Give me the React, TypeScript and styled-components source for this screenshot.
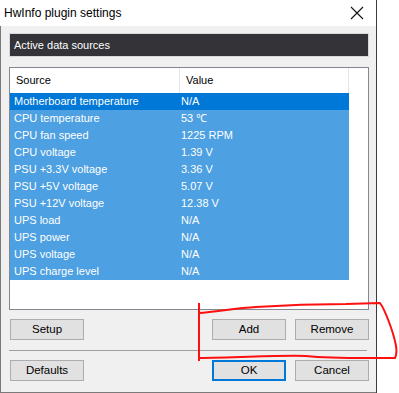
import styled, { createGlobalStyle } from "styled-components";

const GlobalStyle = createGlobalStyle`
  html, body {
    margin: 0;
    padding: 0;
    background: #fff;
  }
  body {
    font-family: "Liberation Sans", "Noto Sans", sans-serif;
    font-size: 11px;
  }
`;

const rows = [
  ["Motherboard temperature", "N/A"],
  ["CPU temperature", "53 \u2103"],
  ["CPU fan speed", "1225 RPM"],
  ["CPU voltage", "1.39 V"],
  ["PSU +3.3V voltage", "3.36 V"],
  ["PSU +5V voltage", "5.07 V"],
  ["PSU +12V voltage", "12.38 V"],
  ["UPS load", "N/A"],
  ["UPS power", "N/A"],
  ["UPS voltage", "N/A"],
  ["UPS charge level", "N/A"],
];

const App = () => {
  return (
    <>
      <GlobalStyle />
      <Screen>
        <Window>
          <TitleBar>
            <Title>HwInfo plugin settings</Title>
            <CloseIcon width="14" height="14" viewBox="0 0 14 14">
              <path d="M1 1 L13 13 M13 1 L1 13" stroke="#111" strokeWidth="1.1" />
            </CloseIcon>
          </TitleBar>
          <Body>
            <SectionHeader>Active data sources</SectionHeader>
            <ListBox>
              <ListHeader>
                <HeaderCell>Source</HeaderCell>
                <HeaderCell>Value</HeaderCell>
                <HeaderFiller />
              </ListHeader>
              {rows.map(([name, value], i) => (
                <Row key={name} $active={i === 0}>
                  <NameCell>{name}</NameCell>
                  <ValueCell>{value}</ValueCell>
                </Row>
              ))}
            </ListBox>
            <ButtonRow>
              <Button>Setup</Button>
              <Spacer />
              <Button>Add</Button>
              <Button>Remove</Button>
            </ButtonRow>
            <Separator />
            <ButtonRow>
              <Button>Defaults</Button>
              <Spacer />
              <Button $default>OK</Button>
              <Button>Cancel</Button>
            </ButtonRow>
          </Body>
        </Window>
        <Scribble width="210" height="62" viewBox="0 0 210 62">
          <path
            d="M3 1 L3 59 M3 11 C20 10 40 6 60 5 C90 3 120 2 150 2 L184 1 C187 5 190 12 193 20 C196 28 199 38 200 44 C201 50 200 54 199 56 C170 56 140 57 110 54 C80 53 40 56 3 56"
            fill="none"
            stroke="#ff1010"
            strokeWidth="2"
            strokeLinejoin="round"
          />
        </Scribble>
      </Screen>
    </>
  );
};

const Screen = styled.div`
  position: relative;
  width: 399px;
  height: 393px;
  overflow: hidden;
`;

const Window = styled.div`
  width: 376px;
  height: 393px;
  border-right: 1px solid #3c3c3c;
  display: flex;
  flex-direction: column;
`;

const TitleBar = styled.div`
  height: 26px;
  flex-shrink: 0;
  background: #fff;
  display: flex;
  align-items: center;
  padding: 0 12px 0 4px;
`;

const Title = styled.div`
  flex: 1;
  color: #000;
  font-size: 12px;
  padding-bottom: 1px;
`;

const CloseIcon = styled.svg`
  display: block;
`;

const Body = styled.div`
  flex: 1;
  background: #f0f0f0;
  border-left: 1px solid #7a7a7a;
  border-bottom: 1px solid #7a7a7a;
  padding: 7px 7px 0 8px;
  display: flex;
  flex-direction: column;
`;

const SectionHeader = styled.div`
  height: 22px;
  background: #333338;
  border: 1px solid #d8d8d8;
  color: #fff;
  font-size: 11px;
  line-height: 22px;
  padding-left: 4px;
`;

const ListBox = styled.div`
  margin-top: 10px;
  height: 241px;
  border: 1px solid #828790;
  background: #fff;
`;

const ListHeader = styled.div`
  display: grid;
  grid-template-columns: 170px 169px 1fr;
  height: 25px;
`;

const HeaderCell = styled.div`
  border-right: 1px solid #e5e5e5;
  color: #000;
  font-size: 11px;
  line-height: 25px;
  padding-left: 6px;
`;

const HeaderFiller = styled.div``;

const Row = styled.div<{ $active?: boolean }>`
  display: grid;
  grid-template-columns: 170px 169px;
  height: 17px;
  background: ${(p) => (p.$active ? "#0078d7" : "#4da0e1")};
  color: #fff;
  font-size: 11px;
  line-height: 17px;
  width: 339px;
`;

const NameCell = styled.div`
  padding-left: 4px;
  white-space: nowrap;
`;

const ValueCell = styled.div`
  padding-left: 1px;
  white-space: nowrap;
`;

const ButtonRow = styled.div`
  margin-top: 9px;
  display: flex;
  gap: 9px;
  padding-left: 1px;
`;

const Spacer = styled.div`
  flex: 1;
`;

const Button = styled.button<{ $default?: boolean }>`
  width: 74px;
  height: 21px;
  background: #e1e1e1;
  border: ${(p) => (p.$default ? "2px solid #0078d7" : "1px solid #adadad")};
  color: #000;
  font-family: "Liberation Sans", "Noto Sans", sans-serif;
  font-size: 11.5px;
  padding: 0;
  line-height: 1;
`;

const Separator = styled.div`
  margin-top: 10px;
  height: 1px;
  background: #a0a0a0;
  margin-right: 2px;
`;

const Scribble = styled.svg`
  position: absolute;
  left: 196px;
  top: 302px;
`;

export default App;
